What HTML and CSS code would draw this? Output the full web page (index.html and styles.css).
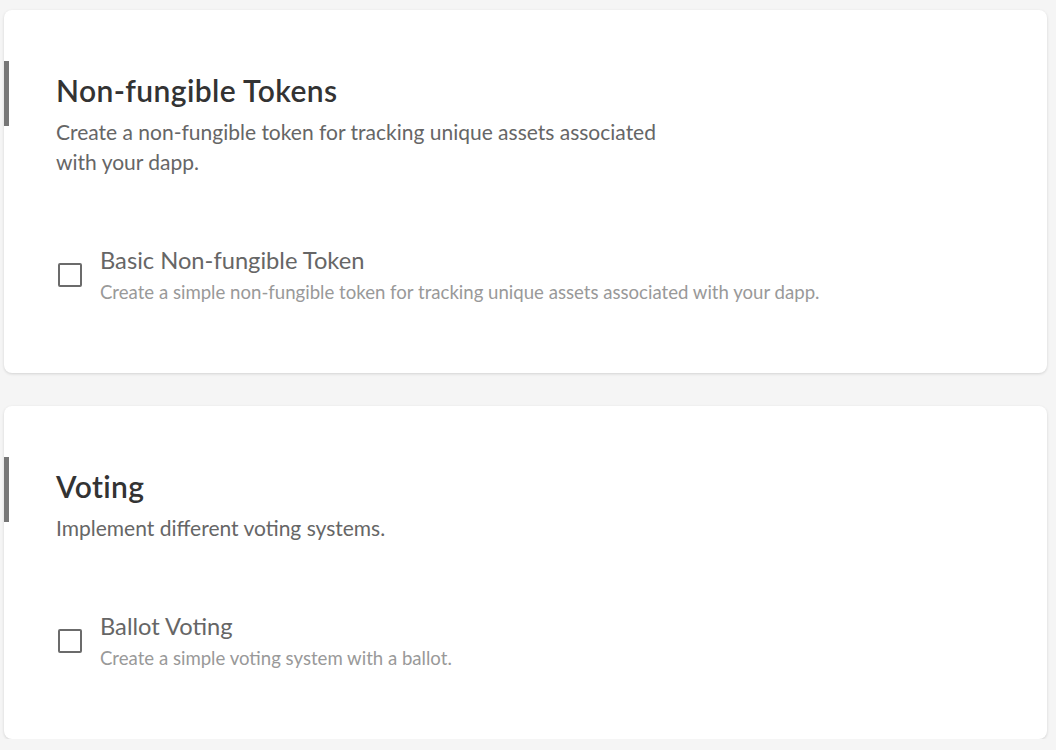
FILE: index.html
```html
<!DOCTYPE html>
<html lang="en">
<head>
<meta charset="utf-8">
<title>Contracts</title>
<link rel="stylesheet" href="styles.css">
</head>
<body>
<main class="page">
  <section class="card">
    <h2 class="card-title">Non-fungible Tokens</h2>
    <p class="card-desc">Create a non-fungible token for tracking unique assets associated with your dapp.</p>
    <label class="option">
      <span class="checkbox"></span>
      <span class="option-text">
        <span class="option-title">Basic Non-fungible Token</span>
        <span class="option-desc">Create a simple non-fungible token for tracking unique assets associated with your dapp.</span>
      </span>
    </label>
  </section>
  <section class="card">
    <h2 class="card-title">Voting</h2>
    <p class="card-desc">Implement different voting systems.</p>
    <label class="option">
      <span class="checkbox"></span>
      <span class="option-text">
        <span class="option-title">Ballot Voting</span>
        <span class="option-desc">Create a simple voting system with a ballot.</span>
      </span>
    </label>
  </section>
</main>
</body>
</html>
```

FILE: styles.css
```css
html, body {
  margin: 0;
  padding: 0;
  background: #f5f5f5;
}

body {
  font-family: "Lato", "Open Sans", sans-serif;
}

.page {
  display: flex;
  flex-direction: column;
  gap: 33px;
  padding: 10px 9px 0 4px;
}

.card {
  background: #ffffff;
  border-radius: 8px;
  box-shadow: 0 1px 3px rgba(0, 0, 0, 0.14);
  padding: 62px 52px 69px 52px;
}

.card-title {
  position: relative;
  margin: 0;
  font-size: 30px;
  line-height: 36px;
  font-weight: 600;
  letter-spacing: 0.4px;
  color: #333333;
}

.card-title::before {
  content: "";
  position: absolute;
  left: -52px;
  top: -11px;
  width: 5px;
  height: 65px;
  background: #777777;
}

.card-desc {
  margin: 9px 0 0 0;
  max-width: 620px;
  font-size: 21px;
  line-height: 30px;
  color: #666666;
}

.option {
  display: flex;
  align-items: center;
  gap: 18px;
  margin-top: 68px;
  padding-left: 2px;
}

.checkbox {
  flex: none;
  width: 20px;
  height: 20px;
  border: 2px solid #6b6b6b;
  border-radius: 2px;
  margin-top: 1px;
}

.option-text {
  display: flex;
  flex-direction: column;
  gap: 5px;
}

.option-title {
  font-size: 23.7px;
  line-height: 30px;
  color: #666666;
}

.option-desc {
  font-size: 18.6px;
  line-height: 24px;
  color: #999999;
}
```
